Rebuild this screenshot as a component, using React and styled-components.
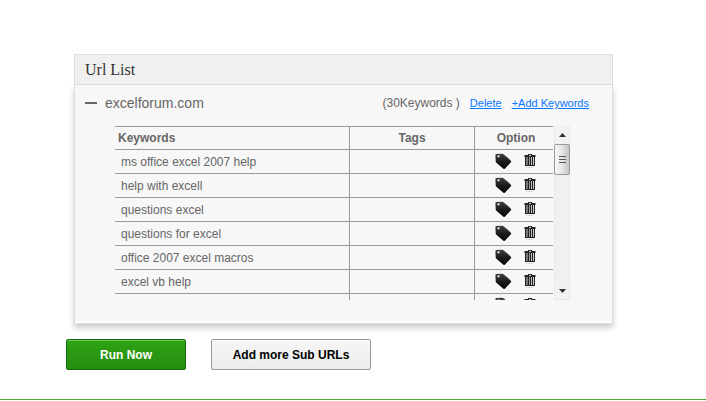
import { useRef, useState } from "react";
import styled, { createGlobalStyle } from "styled-components"

const keywords = [
    "ms office excel 2007 help",
    "help with excell",
    "questions excel",
    "questions for excel",
    "office 2007 excel macros",
    "excel vb help",
    "",
]

const TRACK = 139
const THUMB = 31

function TagIcon() {
    return (
        <svg width="17" height="17" viewBox="0 0 17 17" aria-hidden="true">
            <defs>
                <linearGradient id="tagFill" x1="0" y1="0" x2="0" y2="1">
                    <stop offset="0" stopColor="#444" />
                    <stop offset="0.5" stopColor="#1c1c1c" />
                    <stop offset="1" stopColor="#000" />
                </linearGradient>
            </defs>
            <path fill="url(#tagFill)" fillRule="evenodd" d="M1.5 1 L7.2 .7 Q8 .7 8.6 1.2 L15.6 7.4 Q16.6 8.3 16 9.3 L10 15.4 Q9 16.4 8 15.5 L1.4 9.8 Q.7 9.2 .7 8.2 L.4 2.2 Q.4 1.1 1.5 1 Z M3.5 2.2 A1.1 1.1 0 1 0 3.5 4.4 A1.1 1.1 0 1 0 3.5 2.2 Z" />
        </svg>
    )
}

function TrashIcon() {
    return (
        <svg width="12" height="15" viewBox="0 0 12 15" aria-hidden="true">
            <path fill="#222" d="M4 0H8V1H11.5V3H.5V1H4Z" />
            <path fill="#ddd" d="M5 1H7V2H5Z" />
            <path fill="#222" d="M1 3H11V12H1Z" />
            <path fill="#777" d="M2 3H4V11H2Z" />
            <path fill="#999" d="M5 3H6V11H5Z" />
            <path fill="#bbb" d="M7 3H8V11H7Z" />
            <path fill="#ccc" d="M9 3H10V11H9Z" />
            <path fill="#ddd" d="M2 13H10V14H2Z" />
        </svg>
    )
}

function App() {
    const listRef = useRef(null)
    const [open, setOpen] = useState(true)
    const [thumbTop, setThumbTop] = useState(0)

    function handleScroll(e) {
        const { scrollTop, scrollHeight, clientHeight } = e.currentTarget
        const range = scrollHeight - clientHeight
        setThumbTop(range > 0 ? Math.round((scrollTop / range) * (TRACK - THUMB)) : 0)
    }

    return (
        <Page>
            <GlobalStyle />
            <Panel>
                <PanelTitle>Url List</PanelTitle>
                <PanelBody>
                    <SiteRow>
                        <Toggle type="button" aria-label="Toggle keywords" aria-expanded={open} onClick={() => setOpen(!open)} />
                        <SiteName>excelforum.com</SiteName>
                        <Count>(30Keywords )</Count>
                        <SiteLink href="#delete">Delete</SiteLink>
                        <SiteLink href="#add-keywords">+Add Keywords</SiteLink>
                    </SiteRow>

                    {open ?
                        <ListWrap>
                            <ListScroll ref={listRef} onScroll={handleScroll}>
                                <KeywordTable>
                                    <colgroup>
                                        <col />
                                        <Col $width={125} />
                                        <Col $width={78} />
                                    </colgroup>
                                    <thead>
                                        <tr>
                                            <HeadCell $align="left">Keywords</HeadCell>
                                            <HeadCell>Tags</HeadCell>
                                            <HeadCell>Option</HeadCell>
                                        </tr>
                                    </thead>
                                    <tbody>
                                        {keywords.map((keyword, i) => (
                                            <tr key={i}>
                                                <Cell>{keyword}</Cell>
                                                <Cell />
                                                <Cell>
                                                    <Options>
                                                        <IconButton type="button" aria-label={"Tag " + keyword}><TagIcon /></IconButton>
                                                        <IconButton type="button" aria-label={"Delete " + keyword}><TrashIcon /></IconButton>
                                                    </Options>
                                                </Cell>
                                            </tr>
                                        ))}
                                    </tbody>
                                </KeywordTable>
                            </ListScroll>
                            <Scrollbar>
                                <Arrow type="button" aria-label="Scroll up" onClick={() => listRef.current.scrollBy(0, -24)}>
                                    <svg width="7" height="4" viewBox="0 0 7 4"><path fill="#333" d="M0 4L3.5 0L7 4Z" /></svg>
                                </Arrow>
                                <Track>
                                    <Thumb style={{ marginTop: thumbTop }}>
                                        <svg width="7" height="8" viewBox="0 0 7 8"><path stroke="#555" d="M0 .5H7M0 3.5H7M0 6.5H7" /></svg>
                                    </Thumb>
                                </Track>
                                <Arrow type="button" aria-label="Scroll down" onClick={() => listRef.current.scrollBy(0, 24)}>
                                    <svg width="7" height="4" viewBox="0 0 7 4"><path fill="#333" d="M0 0L3.5 4L7 0Z" /></svg>
                                </Arrow>
                            </Scrollbar>
                        </ListWrap>
                        : null
                    }
                </PanelBody>
            </Panel>

            <Actions>
                <ActionButton type="button" $primary>Run Now</ActionButton>
                <ActionButton type="button">Add more Sub URLs</ActionButton>
            </Actions>
            <Divider />
        </Page>
    )
}

export default App

const GlobalStyle = createGlobalStyle`
    * {
        box-sizing: border-box;
    }

    body {
        margin: 0;
        background: #fff;
        color: #666;
        font-family: "Liberation Sans", Arial, sans-serif;
        font-size: 12px;
    }
`

const Page = styled.div`
    padding-top: 54px;
`

const Panel = styled.section`
    margin: 0 93px 0 74px;
`

const PanelTitle = styled.h2`
    margin: 0;
    height: 31px;
    padding-left: 10px;
    border: 1px solid #ddd;
    background: #f0f0f0;
    color: #333;
    font-family: "Liberation Serif", "Times New Roman", serif;
    font-size: 16px;
    font-weight: normal;
    line-height: 30px;
`

const PanelBody = styled.div`
    padding: 9px 23px 23px 10px;
    border: 1px solid #ddd;
    border-top: none;
    background: #f7f7f7;
    box-shadow: inset 0 -2px 0 #fff, 0 4px 6px rgba(0, 0, 0, 0.2);
`

const SiteRow = styled.div`
    display: flex;
    align-items: center;
    height: 18px;
`

const Toggle = styled.button`
    display: flex;
    align-items: center;
    width: 12px;
    height: 18px;
    margin-right: 8px;
    padding: 0;
    border: none;
    background: none;
    cursor: pointer;

    &::before {
        content: "";
        width: 12px;
        height: 2px;
        background: #666;
    }
`

const SiteName = styled.span`
    flex: 1;
    font-size: 14px;
`

const Count = styled.span`
    font-size: 12px;
`

const SiteLink = styled.a`
    margin-left: 10px;
    color: #0a78ff;
    font-size: 11px;
`

const ListWrap = styled.div`
    display: flex;
    margin: 14px 19px 0 30px;
`

const ListScroll = styled.div`
    flex: 1;
    height: 174px;
    overflow-y: auto;
    scrollbar-width: none;
`

const KeywordTable = styled.table`
    width: 100%;
    table-layout: fixed;
    border-collapse: separate;
    border-spacing: 0;
    border-top: 1px solid #999;
`

const Col = styled.col`
    width: ${({ $width }) => $width}px;
`

const HeadCell = styled.th`
    height: 23px;
    padding: 0 3px;
    border-bottom: 1px solid #999;
    border-right: 1px solid #999;
    font-weight: bold;
    text-align: ${({ $align }) => $align || "center"};

    &:last-child {
        padding: 0 0 0 4px;
        border-right: none;
    }
`

const Cell = styled.td`
    height: 24px;
    padding: 0 6px;
    border-bottom: 1px solid #999;
    border-right: 1px solid #999;

    &:last-child {
        padding: 0 0 0 2px;
        border-right: none;
    }
`

const Options = styled.div`
    display: flex;
    justify-content: center;
    gap: 12px;
`

const IconButton = styled.button`
    display: flex;
    align-items: center;
    padding: 0;
    border: none;
    background: none;
    cursor: pointer;
`

const Scrollbar = styled.div`
    display: flex;
    flex-direction: column;
    width: 16px;
    margin-left: 1px;
    border: 1px solid #e8e8e8;
    border-top: none;
    background: #f0f0f0;
`

const Arrow = styled.button`
    display: flex;
    align-items: center;
    justify-content: center;
    height: 18px;
    padding: 0;
    border: none;
    background: #f2f2f2;

    &:last-child {
        height: 16px;
    }
`

const Track = styled.div`
    flex: 1;
    margin: 0 -1px;
`

const Thumb = styled.div`
    display: flex;
    align-items: center;
    justify-content: center;
    height: 31px;
    border: 1px solid #999;
    border-radius: 2px;
    background: linear-gradient(to right, #f8f8f8, #e6e6e6 50%, #c4c4c8);
`

const Actions = styled.div`
    display: flex;
    gap: 25px;
    padding: 15px 66px 29px;
`

const ActionButton = styled.button`
    height: 31px;
    min-width: ${({ $primary }) => $primary ? 120 : 160}px;
    padding: 0 20px;
    border: 1px solid ${({ $primary }) => $primary ? "#14690a" : "#999"};
    border-radius: 2px;
    background: ${({ $primary }) => $primary ? "linear-gradient(#2fa315, #268c0f)" : "linear-gradient(#f6f6f6, #ececec)"};
    box-shadow: inset 0 1px 0 ${({ $primary }) => $primary ? "#6cc558" : "#fff"};
    color: ${({ $primary }) => $primary ? "#fff" : "#000"};
    font-family: inherit;
    font-size: 12px;
    font-weight: bold;
    cursor: pointer;
`

const Divider = styled.hr`
    margin: 0;
    border: none;
    border-top: 1px solid #4fa83d;
`
